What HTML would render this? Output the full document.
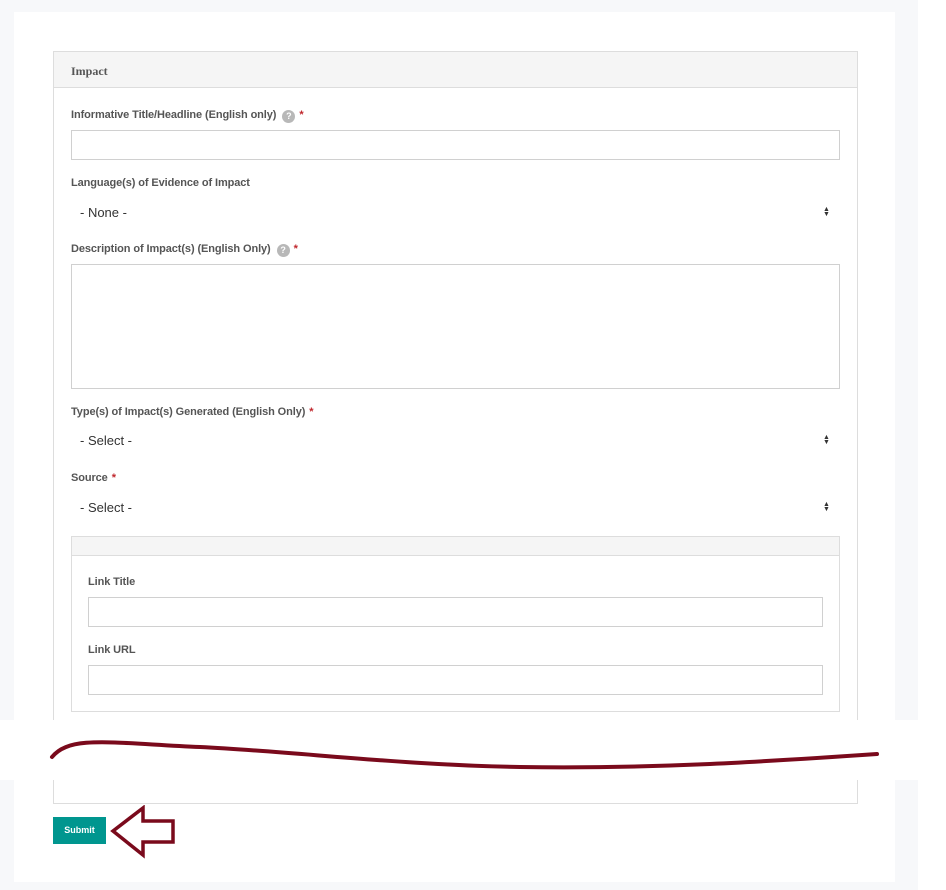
<!DOCTYPE html>
<html><head><meta charset="utf-8"><style>
*{margin:0;padding:0;box-sizing:border-box}
html,body{width:946px;height:890px;overflow:hidden}
body{background:#fff;position:relative;font-family:"Liberation Sans",sans-serif}
.a{position:absolute}
.lbl{position:absolute;font-size:11px;font-weight:bold;color:#555;letter-spacing:-0.1px;white-space:nowrap}
.req{color:#c0272d;margin-left:4px}
.q{display:inline-block;width:13px;height:13px;border-radius:50%;background:#b8b8b8;color:#fff;font-size:9px;text-align:center;line-height:13px;margin-left:6px;vertical-align:-1px}
.in{position:absolute;border:1px solid #d0d0d0;background:#fff}
.sel{position:absolute;font-size:13px;color:#333}
.arr{position:absolute;left:823px;font-size:7px;color:#333;line-height:5px}
</style></head><body>
<div class="a" style="left:0;top:0;width:918px;height:890px;background:#f7f8fa"></div>
<div class="a" style="left:14px;top:12px;width:881px;height:870px;background:#fff"></div>
<div class="a" style="left:53px;top:51px;width:805px;height:753px;border:1px solid #ddd"></div>
<div class="a" style="left:54px;top:52px;width:803px;height:36px;background:#f5f5f5;border-bottom:1px solid #ddd"></div>
<div class="lbl" style="left:71px;top:64px;font-family:'Liberation Serif',serif;font-size:12px;letter-spacing:0">Impact</div>

<div class="lbl" style="left:71px;top:109px">Informative Title/Headline (English only)<span class="q">?</span><span class="req">*</span></div>
<div class="in" style="left:71px;top:130px;width:769px;height:30px"></div>

<div class="lbl" style="left:71px;top:177px">Language(s) of Evidence of Impact</div>
<div class="sel" style="left:80px;top:205px">- None -</div>
<div class="arr" style="top:207px">▲<br>▼</div>

<div class="lbl" style="left:71px;top:243px">Description of Impact(s) (English Only)<span class="q">?</span><span class="req">*</span></div>
<div class="in" style="left:71px;top:264px;width:769px;height:125px"></div>

<div class="lbl" style="left:71px;top:406px">Type(s) of Impact(s) Generated (English Only)<span class="req">*</span></div>
<div class="sel" style="left:80px;top:433px">- Select -</div>
<div class="arr" style="top:435px">▲<br>▼</div>

<div class="lbl" style="left:71px;top:472px">Source<span class="req">*</span></div>
<div class="sel" style="left:80px;top:500px">- Select -</div>
<div class="arr" style="top:502px">▲<br>▼</div>

<div class="a" style="left:71px;top:536px;width:769px;height:176px;border:1px solid #ddd"></div>
<div class="a" style="left:72px;top:537px;width:767px;height:19px;background:#f5f5f5;border-bottom:1px solid #ddd"></div>
<div class="lbl" style="left:88px;top:576px">Link Title</div>
<div class="in" style="left:88px;top:597px;width:735px;height:30px"></div>
<div class="lbl" style="left:88px;top:644px">Link URL</div>
<div class="in" style="left:88px;top:665px;width:735px;height:30px"></div>

<div class="a" style="left:0;top:720px;width:946px;height:60px;background:#fff"></div>
<svg class="a" style="left:0;top:720px" width="946" height="60">
<path d="M52 37 C70 15 110 23 200 27 C300 32 400 45 520 47 C650 49 760 42 877 34" fill="none" stroke="#7a0a1c" stroke-width="4" stroke-linecap="round"/>
</svg>

<div class="a" style="left:53px;top:817px;width:53px;height:27px;background:#00968f;color:#fff;font-size:9px;font-weight:bold;text-align:center;line-height:27px">Submit</div>
<svg class="a" style="left:105px;top:805px" width="75" height="55">
<path d="M8 26 L38 3 L38 16 L68 16 L68 37 L38 37 L38 50 Z" fill="#fff" stroke="#7a0a1c" stroke-width="3.5" stroke-linejoin="miter"/>
</svg>
</body></html>
